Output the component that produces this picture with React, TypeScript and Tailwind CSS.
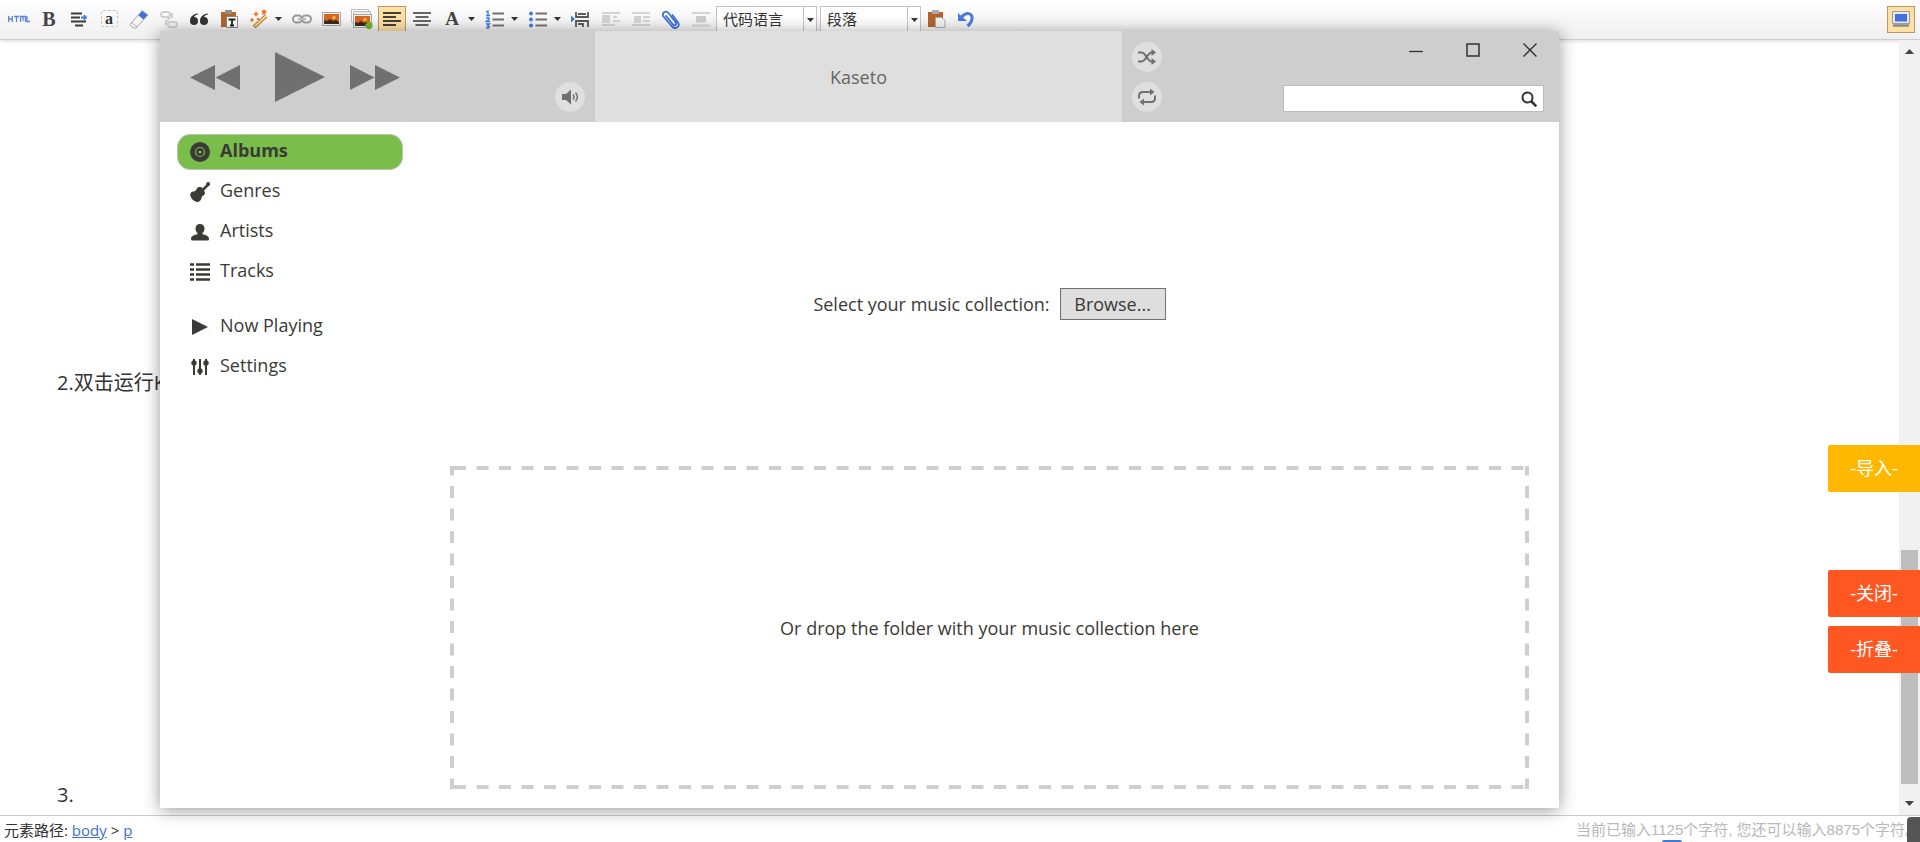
import type { ReactNode } from "react";

const INK = "#3a3a36";

function ToolButton({ label, active, menu, children }: { label: string; active?: boolean; menu?: boolean; children: ReactNode }) {
  return (
    <button
      type="button"
      aria-label={label}
      className={
        active
          ? "mx-px flex h-[27px] w-7 shrink-0 items-center justify-center border border-[#b89a6a] bg-[#fde0a4] pb-[2px]"
          : menu
            ? "flex h-[27px] w-[43px] shrink-0 items-center gap-[6px] pb-[2px] pl-[5px]"
            : "flex h-[27px] w-[30px] shrink-0 items-center justify-center pb-[2px]"
      }
    >
      {children}
      {menu && <Caret />}
    </button>
  );
}

function Caret() {
  return (
    <svg width="7" height="4" viewBox="0 0 7 4" className="shrink-0" fill="#333">
      <path d="M0 0h7L3.500 4z" />
    </svg>
  );
}

/* 20x20 canvas shared by every toolbar glyph */
function Glyph({ children }: { children: ReactNode }) {
  return (
    <svg width="20" height="20" viewBox="0 0 20 20" fill="none" className="shrink-0">
      {children}
    </svg>
  );
}

function ToolSelect({ label, value }: { label: string; value: string }) {
  return (
    <div className="relative h-[27px] w-[101px] shrink-0 border border-[#c4c4c4] bg-white">
      <select aria-label={label} className="h-full w-full appearance-none bg-transparent pb-[2px] pl-[6px] text-[15px] leading-[24px] text-[#333] outline-none">
        <option>{value}</option>
      </select>
      <span className="pointer-events-none absolute inset-y-0 right-0 flex w-[13px] items-center justify-center border-l border-[#c4c4c4]">
        <Caret />
      </span>
    </div>
  );
}

function Photo({ x, y }: { x: number; y: number }) {
  return (
    <g transform={`translate(${x} ${y})`}>
      <rect x="0.500" y="0.500" width="18" height="13" fill="#f4f4f4" stroke="#a8a8a8" />
      <rect x="2" y="2" width="15" height="10" fill="#d9661f" />
      <path d="M2 12V8l3 1 3-2 3 2 3-1 3 2v2z" fill="#3d2a1c" />
      <circle cx="12" cy="5.500" r="1.800" fill="#ffb347" />
    </g>
  );
}

function Toolbar() {
  return (
    <div className="flex h-10 shrink-0 items-start border-b border-[#cdcdcd] bg-linear-to-b from-white to-[#efefef] pt-[6px] pr-1 pl-1 shadow-[0_1px_4px_rgba(0,0,0,0.15)]">
      <ToolButton label="HTML">
        <svg width="22" height="8" viewBox="0 0 22 8" fill="none" stroke="#5b84d8" strokeWidth="1.300">
          <path d="M.7 1v6M4.300 1v6M.7 4h3.600M6 1.500h5M8.500 1.500V7M12.500 7V1.500h5V7M15 1.500V6M19 1v5.500h3" />
        </svg>
      </ToolButton>
      <ToolButton label="加粗">
        <span className="font-['Liberation_Serif',serif] text-[20px] font-bold leading-5 text-[#444]">B</span>
      </ToolButton>
      <ToolButton label="首行缩进">
        <Glyph>
          <path d="M2 4.500h11M2 8.500h9M2 12.500h15M6 16.500h8" stroke={INK} strokeWidth="2" />
          <path d="M12 8.500h6M15.500 6v5" stroke="#3f78e0" strokeWidth="1.800" />
        </Glyph>
      </ToolButton>
      <ToolButton label="字符边框">
        <span className="flex size-[17px] items-center justify-center rounded-xs border border-dashed border-[#c4c4c4] font-['Liberation_Serif',serif] text-[16px] font-bold leading-3 text-[#333]">
          a
        </span>
      </ToolButton>
      <ToolButton label="清除格式">
        <Glyph>
          <path d="M1 15.500 13 1.500l6 4.500L7 19H4z" fill="#f5f5f5" stroke="#a5a5a5" />
          <path d="m13 2 5.500 4-4 4.500L9.500 6.500z" fill="#3f6fe0" />
          <path d="m3 14 5 4" stroke="#c5a68a" />
        </Glyph>
      </ToolButton>
      <ToolButton label="取消链接">
        <Glyph>
          <g stroke="#d0d0d0" strokeWidth="2">
            <rect x="2" y="3" width="9" height="5" rx="2.500" />
            <rect x="9" y="13" width="9" height="5" rx="2.500" />
            <path d="M13 4v5M7 11v5M11 8 8 12" />
          </g>
        </Glyph>
      </ToolButton>
      <ToolButton label="引用">
        <Glyph>
          <path d="M9 4.500C4 5 1 8 1 12a4 4 0 1 0 4-4c1-1.500 2-2.200 4-2.500zM19 4.500c-5 .5-8 3.500-8 7.500a4 4 0 1 0 4-4c1-1.500 2-2.200 4-2.500z" fill="#333" />
        </Glyph>
      </ToolButton>
      <ToolButton label="纯文本粘贴">
        <Glyph>
          <path d="M2 3h15v15H2z" fill="#b5652a" />
          <path d="M6 1h7v4H6z" fill="#8f8f8f" />
          <path d="M7.500 7.500h11v11h-11z" fill="#fff" stroke="#888" />
          <path d="M9.500 10.500h7M13 10v7M11 16.500h4" stroke="#222" strokeWidth="1.800" />
        </Glyph>
      </ToolButton>
      <ToolButton label="自动排版" menu>
        <Glyph>
          <path d="m5 18 12-11" stroke="#c68a3c" strokeWidth="4" />
          <path d="m6 17 11-10" stroke="#ffe9a8" strokeWidth="1.500" />
          <g fill="#e8772e">
            <path d="m7 2 1 2 2 1-2 1-1 2-1-2-2-1 2-1zM15 0l1 1.500 2 .5-1.500 1.500L17 6l-2-1-2 1 .5-2.500L12 2l2-.5z" />
            <circle cx="3" cy="11" r="1.700" />
            <circle cx="9" cy="10" r="1.300" />
          </g>
        </Glyph>
      </ToolButton>
      <ToolButton label="超链接">
        <Glyph>
          <rect x="1" y="6.500" width="9" height="7" rx="3.500" stroke="#9d9d9d" strokeWidth="2" />
          <rect x="10" y="6.500" width="9" height="7" rx="3.500" stroke="#9d9d9d" strokeWidth="2" />
          <path d="M6 10h8" stroke="#b9b9b9" strokeWidth="2" />
        </Glyph>
      </ToolButton>
      <ToolButton label="单图上传">
        <Glyph>
          <Photo x={0} y={3} />
        </Glyph>
      </ToolButton>
      <ToolButton label="多图上传">
        <svg width="24" height="22" viewBox="0 0 24 22" fill="none" className="shrink-0">
          <path d="M1.500 1.500h17v13h-17z" fill="#fff" stroke="#bbb" />
          <path d="M3.500 3.500h17v13h-17z" fill="#eee" stroke="#bbb" />
          <Photo x={3} y={6} />
          <path d="M19 14v7M15.500 17.500h7" stroke="#72b52c" strokeWidth="4" />
        </svg>
      </ToolButton>
      <ToolButton label="居左对齐" active>
        <Glyph>
          <path d="M1 4h18M1 8h13M1 12h18M1 16h13" stroke="#44403a" strokeWidth="2" />
        </Glyph>
      </ToolButton>
      <ToolButton label="居中对齐">
        <Glyph>
          <path d="M1 4h18M3.500 8h13M1 12h18M3.500 16h13" stroke="#666" strokeWidth="2" />
        </Glyph>
      </ToolButton>
      <ToolButton label="字体颜色" menu>
        <span className="w-5 text-center font-['Liberation_Serif',serif] text-[19px] font-bold leading-5 text-[#444]">A</span>
      </ToolButton>
      <ToolButton label="有序列表" menu>
        <Glyph>
          <path d="M7.500 4.500H19M7.500 10.500H19M7.500 16.500H19" stroke="#77716a" strokeWidth="1.800" />
          <path d="M1 3l2-1v4M1 6.500h4M1 9h3v1.500L1 12.500h4M1 15h3.500L2.500 17l2 .5-1 1.500H1" stroke="#3f78e0" strokeWidth="1.300" />
        </Glyph>
      </ToolButton>
      <ToolButton label="无序列表" menu>
        <Glyph>
          <path d="M7.500 4.500H19M7.500 10.500H19M7.500 16.500H19" stroke="#77716a" strokeWidth="1.800" />
          <g fill="#3f78e0">
            <circle cx="3" cy="4.500" r="2" />
            <circle cx="3" cy="10.500" r="2" />
            <circle cx="3" cy="16.500" r="2" />
          </g>
        </Glyph>
      </ToolButton>
      <ToolButton label="分页">
        <Glyph>
          <path d="M5 3v5h12V3M5 18v-6h12v6M7 5h8M7 15h5v3" stroke="#5a5a5a" strokeWidth="1.800" />
          <path d="M0 6.500 4 10l-4 3.500z" fill="#3f78e0" />
        </Glyph>
      </ToolButton>
      <ToolButton label="左浮动">
        <Glyph>
          <path d="M1 4h18M12 8h4M12 12h7M1 16h13" stroke="#d4d4d4" strokeWidth="1.800" />
          <path d="M1 6h8v8H1z" fill="#d4d4d4" />
        </Glyph>
      </ToolButton>
      <ToolButton label="右浮动">
        <Glyph>
          <path d="M1 4h18M12 8h7M12 12h7M1 16h18" stroke="#d4d4d4" strokeWidth="1.800" />
          <path d="M3 7h7v7H3z" fill="#d4d4d4" />
        </Glyph>
      </ToolButton>
      <ToolButton label="附件">
        <Glyph>
          <path d="m5 7 7 8.500c2 2 4-.2 2.800-2L7.500 4C5 1 0 4 2.500 7.500l8.500 10c3.500 3.500 8.500 0 6-4L11.500 6" stroke="#3f6fdc" strokeWidth="1.800" strokeLinecap="round" />
        </Glyph>
      </ToolButton>
      <ToolButton label="图片居中">
        <Glyph>
          <path d="M1 4h18M1 16.500h18" stroke="#d4d4d4" strokeWidth="1.800" />
          <path d="M5 7h10v6.500H5z" fill="#cdcdcd" />
        </Glyph>
      </ToolButton>
      <div className="flex gap-[3px]">
        <ToolSelect label="代码语言" value="代码语言" />
        <ToolSelect label="段落格式" value="段落" />
      </div>
      <ToolButton label="粘贴">
        <Glyph>
          <path d="M2 3h15v15H2z" fill="#b5652a" />
          <path d="M6 1h7v4H6z" fill="#aaa" />
          <path d="M9.500 8.500h6l3.500 3v7H9.500z" fill="#f3f3f3" stroke="#aaa" />
        </Glyph>
      </ToolButton>
      <ToolButton label="撤销">
        <Glyph>
          <path d="M5 9C10 2 17 4 16 10c-.4 3-2 5-4.500 7" stroke="#4a7be0" strokeWidth="3" />
          <path d="M2 4v8h9z" fill="#4a7be0" />
        </Glyph>
      </ToolButton>
      <div className="ml-auto">
        <ToolButton label="全屏" active>
          <Glyph>
            <path d="M1.500 2.500h17v12h-17z" fill="#e8e8e8" stroke="#999" />
            <path d="M4 5h12v7.500H4z" fill="#3f6fe0" />
            <path d="M2 16.500h16" stroke="#888" strokeWidth="2.500" />
          </Glyph>
        </ToolButton>
      </div>
    </div>
  );
}

const NAV_GROUPS = [
  [
    {
      label: "Albums",
      icon: (
        <>
          <circle cx="10" cy="10" r="10" fill={INK} />
          <circle cx="10" cy="10" r="4.500" stroke="#79bd4a" strokeWidth="1.200" />
          <circle cx="10" cy="10" r="1.500" fill="#79bd4a" />
        </>
      ),
    },
    {
      label: "Genres",
      icon: (
        <path
          d="M16.500.5 19.500 0 20 3l-2 1.500-4 4c2 3 .5 4.500-1.500 5.500-1 .5-.8 2-1.500 3.500-1.200 2.800-4 3-6.500 1.500C1.500 17 0 14.500.3 12c.3-2 2.200-2.500 4.200-2.800C6.500 9 6.500 5.500 9 5c1.500-.2 2.500 0 3.500 1.200L16 3z"
          fill={INK}
        />
      ),
    },
    {
      label: "Artists",
      icon: (
        <path
          d="M10 2c2.800 0 4.500 1.800 4.500 4.500 0 2-.8 3.500-2 4.500v1.200c3.500.8 6.500 2 6.500 4.300 0 1.500-.5 2-1.500 2h-15c-1 0-1.500-.5-1.500-2 0-2.300 3-3.500 6.500-4.300V11c-1.200-1-2-2.500-2-4.500C5.500 3.800 7.200 2 10 2z"
          fill={INK}
        />
      ),
    },
    {
      label: "Tracks",
      icon: <path d="M0 2.500h4M6 2.500h14M0 7.500h4M6 7.500h14M0 12.500h4M6 12.500h14M0 17.500h4M6 17.500h14" stroke={INK} strokeWidth="2.500" />,
    },
  ],
  [
    { label: "Now Playing", icon: <path d="M2 2l16 8-16 8z" fill={INK} /> },
    {
      label: "Settings",
      icon: (
        <>
          <path d="M4 2v16M10 2v16M16 2v16" stroke={INK} strokeWidth="2" />
          <g fill={INK}>
            <circle cx="4" cy="6" r="2.700" />
            <circle cx="10" cy="14" r="2.700" />
            <circle cx="16" cy="6" r="2.700" />
          </g>
        </>
      ),
    },
  ],
];

function Sidebar() {
  return (
    <nav className="flex w-[290px] shrink-0 flex-col gap-[19px] pt-3 pr-[47px] pl-[17px]">
      {NAV_GROUPS.map((group, i) => (
        <ul key={i} className="flex flex-col gap-1">
          {group.map((item) => (
            <li key={item.label}>
              <button
                type="button"
                className={
                  item.label === "Albums"
                    ? "flex h-9 w-full items-center gap-[10px] rounded-[13px] border border-[#b9c4b0] bg-[#79bd4a] pl-3 text-[18px] leading-6 font-bold"
                    : "flex h-9 w-full items-center gap-[10px] border border-transparent pl-3 text-[18px] leading-6"
                }
              >
                <svg width="20" height="20" viewBox="0 0 20 20" fill="none" className="shrink-0">
                  {item.icon}
                </svg>
                <span className="pb-1">{item.label}</span>
              </button>
            </li>
          ))}
        </ul>
      ))}
    </nav>
  );
}

function RoundButton({ label, children }: { label: string; children: ReactNode }) {
  return (
    <button type="button" aria-label={label} className="flex size-[30px] items-center justify-center rounded-full bg-[#dfdfdf] text-[#707070]">
      <svg width="20" height="20" viewBox="0 0 20 20" fill="none">
        {children}
      </svg>
    </button>
  );
}

function PlayerHeader() {
  return (
    <header className="grid h-[91px] shrink-0 grid-cols-[435px_1fr_437px] bg-[#cecece]">
      <div className="flex items-center justify-between pr-[10px] pl-[30px] text-[#707070]">
        <div className="flex items-center gap-[25px] pt-px">
          <button type="button" aria-label="Previous" className="mr-[10px]">
            <svg width="50" height="25" viewBox="0 0 50 25" fill="currentColor">
              <path d="M25 0v25L0 12.500zM50 0v25L25.500 12.500z" />
            </svg>
          </button>
          <button type="button" aria-label="Play">
            <svg width="50" height="50" viewBox="0 0 50 50" fill="currentColor">
              <path d="M0 0l50 25L0 50z" />
            </svg>
          </button>
          <button type="button" aria-label="Next">
            <svg width="50" height="25" viewBox="0 0 50 25" fill="currentColor">
              <path d="M0 0l24.500 12.500L0 25zM25 0l25 12.500L25 25z" />
            </svg>
          </button>
        </div>
        <div className="self-end pb-[10px]">
          <RoundButton label="Volume">
            <path d="M2 7h4l5-4.500v15L6 13H2z" fill="currentColor" />
            <path d="M13 7.500c1.200 1.500 1.200 3.500 0 5M15.500 5.500c2.300 2.700 2.300 6.300 0 9" stroke="currentColor" strokeWidth="1.500" />
          </RoundButton>
        </div>
      </div>

      <div className="flex items-center justify-center bg-[#dfdfdf]">
        <h1 className="text-[18px] leading-6 text-[#666]">Kaseto</h1>
      </div>

      <div className="flex justify-between pr-[15px] pl-[10px]">
        <div className="flex flex-col justify-end gap-[10px] pb-[10px]">
          <RoundButton label="Shuffle">
            <path d="M1 5.500h3.500c4.500 0 6 9 10 9H16M1 14.500h3.500c4.500 0 6-9 10-9H16" stroke="currentColor" strokeWidth="2" />
            <path d="M14.500 2 19 5.500 14.500 9zM14.500 11l4.500 3.500-4.500 3.500z" fill="currentColor" />
          </RoundButton>
          <RoundButton label="Repeat">
            <path d="M2 11.500V9c0-2.500 1.500-4 4-4h8M18 8.500V11c0 2.500-1.500 4-4 4H6" stroke="currentColor" strokeWidth="2" />
            <path d="M13 1.500 17.500 5 13 8.500zM7 11.500 2.500 15 7 18.500z" fill="currentColor" />
          </RoundButton>
        </div>
        <div className="flex flex-col justify-between pt-3 pb-[10px]">
          <div className="flex justify-end gap-[43px] pr-[7px] text-[#333]">
            <button type="button" aria-label="Minimize">
              <svg width="14" height="14" viewBox="0 0 14 14">
                <path d="M0 8.500h14" stroke="currentColor" strokeWidth="1.300" />
              </svg>
            </button>
            <button type="button" aria-label="Maximize">
              <svg width="14" height="14" viewBox="0 0 14 14" fill="none">
                <path d="M1 1h12v12H1z" stroke="currentColor" strokeWidth="1.500" />
              </svg>
            </button>
            <button type="button" aria-label="Close">
              <svg width="14" height="14" viewBox="0 0 14 14">
                <path d="M.5.5l13 13M13.500.5l-13 13" stroke="currentColor" strokeWidth="1.400" />
              </svg>
            </button>
          </div>
          <label className="flex h-[27px] w-[261px] items-center border border-[#bbb] bg-white pr-[6px] pl-2">
            <input type="text" aria-label="Search" className="min-w-0 flex-1 bg-transparent text-[15px] outline-none" />
            <svg width="16" height="16" viewBox="0 0 16 16" fill="none" stroke="#333">
              <circle cx="6.500" cy="6.500" r="5" strokeWidth="2" />
              <path d="m10 10 5.300 5.300" strokeWidth="2.600" />
            </svg>
          </label>
        </div>
      </div>
    </header>
  );
}

function PlayerWindow() {
  return (
    <section className="absolute top-[31px] right-[361px] bottom-[34px] left-[160px] flex flex-col bg-white font-['Open_Sans','Noto_Sans_CJK_SC',sans-serif] text-[#3a3a36] shadow-[0_2px_16px_rgba(0,0,0,0.4)]">
      <PlayerHeader />
      <div className="flex min-h-0 flex-1">
        <Sidebar />
        <main className="flex min-w-0 flex-1 flex-col pr-[30px] pb-[19px]">
          <div className="flex flex-1 items-center justify-center gap-[10px] pt-5 text-[18px] leading-6">
            <label htmlFor="browse" className="pb-px">Select your music collection:</label>
            <button id="browse" type="button" className="h-8 w-[106px] border border-[#707070] bg-[#dedede]">
              Browse...
            </button>
          </div>
          <div className="relative flex h-[323px] items-center justify-center text-[18px] leading-6">
            <svg className="absolute inset-0 h-full w-full" stroke="#cecece" strokeWidth="4" strokeDasharray="12 10.500">
              <svg width="100%" height="4">
                <line x1="4" y1="2" x2="100%" y2="2" />
              </svg>
              <svg y="100%" width="100%" height="4" overflow="visible">
                <line x1="4" y1="-2" x2="100%" y2="-2" />
              </svg>
              <line x1="2" y1="0" x2="2" y2="100%" strokeDashoffset="2.500" />
              <svg x="100%" width="4" height="100%" overflow="visible">
                <line x1="-2" y1="0" x2="-2" y2="100%" strokeDashoffset="2.500" />
              </svg>
            </svg>
            <p>Or drop the folder with your music collection here</p>
          </div>
        </main>
      </div>
    </section>
  );
}

function Scrollbar() {
  return (
    <div className="flex w-[21px] shrink-0 flex-col items-center justify-between bg-[#f1f1f1] py-[9px]">
      <svg width="9" height="5" viewBox="0 0 9 5" fill="#444">
        <path d="M0 5h9L4.500 0z" />
      </svg>
      <div className="mt-auto mb-[17px] h-[234px] w-[17px] bg-[#bdbdbd]" />
      <svg width="9" height="5" viewBox="0 0 9 5" fill="#444">
        <path d="M0 0h9L4.500 5z" />
      </svg>
    </div>
  );
}

function SideActions() {
  return (
    <div className="absolute top-[445px] right-0 flex w-[92px] flex-col text-[18px] leading-6 text-white">
      <button type="button" className="mb-[78px] h-[47px] rounded-l-xs bg-[#ffb800] pb-[2px]">-导入-</button>
      <button type="button" className="mb-[9px] h-[47px] rounded-l-xs bg-[#ff5722] pb-[2px]">-关闭-</button>
      <button type="button" className="h-[47px] rounded-l-xs bg-[#ff5722] pb-[2px]">-折叠-</button>
    </div>
  );
}

export default function App() {
  return (
    <div className="relative flex h-screen flex-col overflow-hidden bg-white font-['Open_Sans','Noto_Sans_CJK_SC',sans-serif] text-[#333]">
      <Toolbar />
      <div className="flex min-h-0 flex-1">
        <article className="flex flex-1 flex-col justify-end gap-[388px] pb-2 pl-[57px] text-[20px] leading-6">
          <p>2.双击运行Kaseto</p>
          <p>3.</p>
        </article>
        <Scrollbar />
      </div>
      <footer className="flex h-[27px] shrink-0 items-center justify-between border-t border-[#ccc] pl-1 text-[15px] leading-5">
        <p className="pt-[2px]">
          元素路径: <a href="#body" className="text-[#3f6fd0] underline">body</a> &gt; <a href="#p" className="text-[#3f6fd0] underline">p</a>
        </p>
        <p className="pt-px font-['Liberation_Sans','Noto_Sans_CJK_SC',sans-serif] text-[#b8b8b8]">
          当前已输入1125个字符, 您还可以输入8875个字符。
        </p>
      </footer>

      <PlayerWindow />
      <SideActions />
      <span className="absolute right-0 bottom-0 h-[25px] w-[13px] rounded-tl bg-[#555]" />
      <span className="absolute right-[238px] bottom-0 h-[2px] w-5 rounded-t-full bg-[#3f78e0]" />
    </div>
  );
}
